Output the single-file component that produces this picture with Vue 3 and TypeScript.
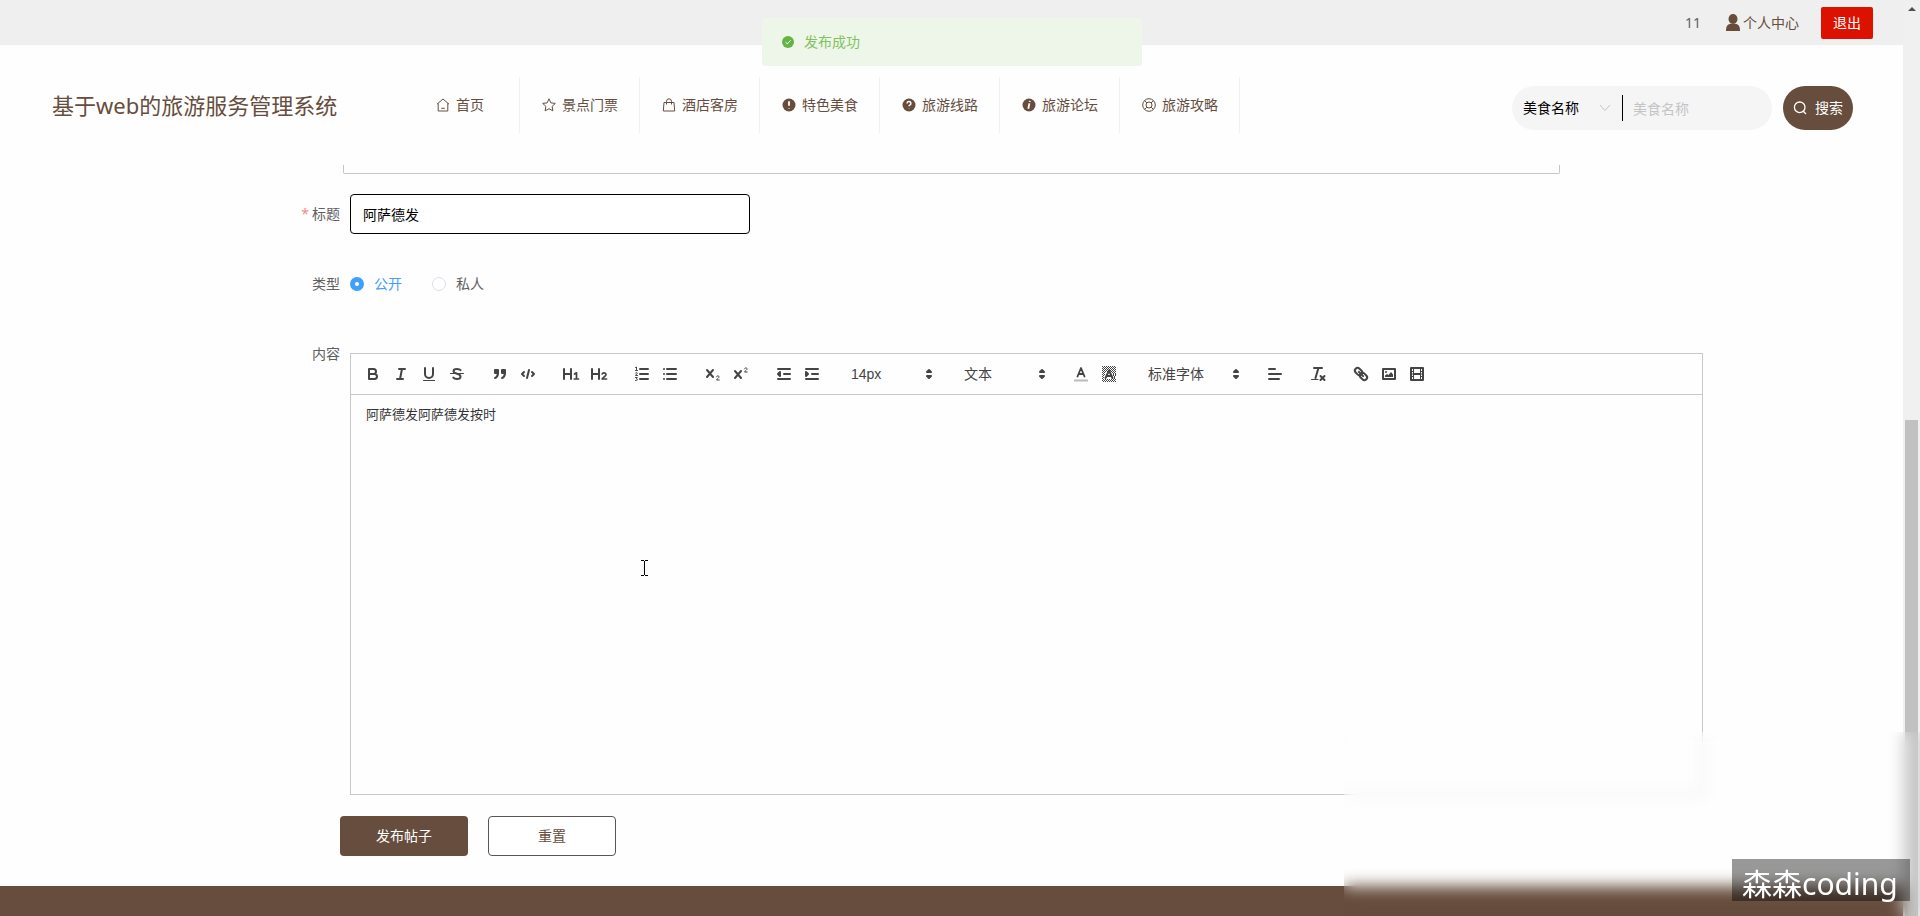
<script setup lang="ts">
import { ref } from 'vue'

interface NavItem {
  label: string
  icon: string
}
interface Tool {
  kind: 'button'
  name: string
  icon: string
}
interface Picker {
  kind: 'picker'
  name: string
  value: string
  wide?: boolean
}

const solid = 'fill="currentColor" stroke="none"'
const disc = `<circle cx="8" cy="8" r="6.5" ${solid}/>`

const navItems: NavItem[] = [
  { label: '首页', icon: '<path d="M2 7.2 8 2l6 5.2M3.2 6.4V14h9.6V6.4M6.3 11.3h3.4"/>' },
  { label: '景点门票', icon: '<path d="m8 1.8 1.9 4.1 4.4.5-3.2 3 .8 4.5L8 11.7l-3.9 2.2.8-4.5-3.2-3 4.4-.5z"/>' },
  { label: '酒店客房', icon: '<path d="M3 5.5h10l.7 8.5H2.3zM5.5 7.500V4.300a2.500 2.500 0 0 1 5 0V7.500"/>' },
  { label: '特色美食', icon: disc + '<path stroke="#fff" stroke-width="1.800" d="M8 4.300v4.400M8 11v.6"/>' },
  { label: '旅游线路', icon: disc + '<path stroke="#fff" stroke-width="1.500" d="M6.100 6.400a1.900 1.900 0 1 1 2.700 1.700c-.6.3-.8.6-.8 1.200M8 11.400v.3"/>' },
  { label: '旅游论坛', icon: disc + '<path stroke="#fff" stroke-width="1.800" d="M8.900 3.900l-.2 1M8.400 6.400 7.300 11.800"/>' },
  { label: '旅游攻略', icon: '<circle cx="8" cy="8" r="6.300"/><circle cx="8" cy="8" r="3"/><path d="m3.600 3.600 2.300 2.300M12.400 3.600l-2.300 2.300M3.600 12.400l2.300-2.300M12.400 12.400l-2.300-2.300"/>' },
]

const btn = (name: string, icon: string): Tool => ({ kind: 'button', name, icon })
const pick = (name: string, value: string, wide = false): Picker => ({ kind: 'picker', name, value, wide })

const toolGroups: (Tool | Picker)[][] = [
  [
    btn('加粗', '<path d="M5 4h4.500a2.500 2.500 0 0 1 0 5H5zM5 9h5.500a2.500 2.500 0 0 1 0 5H5z"/>'),
    btn('斜体', '<path d="M7 4h6M5 14h6M8 14l2-10"/>'),
    btn('下划线', '<path d="M5 3v6a4.012 4.012 0 0 0 4 4 4.012 4.012 0 0 0 4-4V3"/><rect ' + solid + ' x="3" y="15" width="12" height="1"/>'),
    btn('删除线', '<path stroke-width="1" d="M15.500 8.500h-13"/><path d="M12.500 5.200C11.800 4.300 10.600 4 9 4 6.800 4 5.500 4.900 5.500 6.300c0 1.300 1.200 1.800 3.500 2.400 2.400.6 3.500 1.300 3.500 2.800C12.500 13 11.200 14 9 14c-1.700 0-3-.4-3.700-1.400"/>'),
  ],
  [
    btn('引用', '<g fill="currentColor"><rect x="4" y="5" width="3" height="3"/><rect x="11" y="5" width="3" height="3"/><path d="M7 8c0 4.031-3 5-3 5M14 8c0 4.031-3 5-3 5"/></g>'),
    btn('代码', '<path d="M5 7 3 9l2 2M13 7l2 2-2 2M10 5 8 13"/>'),
  ],
  [
    btn('一级标题', '<path d="M2 4v10M9 4v10M2 9h7"/><path stroke-width="1.700" d="M12.500 9 14.500 7.800V14M12.300 14h4.200"/>'),
    btn('二级标题', '<path d="M2 4v10M9 4v10M2 9h7"/><path stroke-width="1.700" d="M12.200 8.900c.3-1.500 3.800-1.500 3.800.5 0 1.600-2.700 2.700-3.800 4.600H16.500"/>'),
  ],
  [
    btn('有序列表', '<path d="M7 4h8M7 9h8M7 14h8"/><path stroke-width="1" d="M2.500 2.500l1-.5v3.500M2.500 5.500h2M2.500 8c.5-.9 2-.6 1.700.3L2.500 10.500h2M2.500 12.500h1.800l-.9 1.300c1.400.1 1.300 1.700 0 1.700h-.9"/>'),
    btn('无序列表', '<path d="M6 4h9M6 9h9M6 14h9M3 4h0M3 9h0M3 14h0"/>'),
  ],
  [
    btn('下标', '<path d="m3 5 6 7M9 5l-6 7"/><path stroke-width="1" d="M12.500 11.800c.2-1.400 2.700-1.300 2.500.2-.1 1-1.700 1.700-2.500 3h2.800"/>'),
    btn('上标', '<path d="m3 6 6 7M9 6l-6 7"/><path stroke-width="1" d="M12.500 3.800c.2-1.400 2.700-1.300 2.500.2-.1 1-1.700 1.700-2.500 3h2.800"/>'),
  ],
  [
    btn('减少缩进', '<path d="M3 14h12M3 4h12M9 9h6"/><path fill="currentColor" d="M5 7v4L3 9z"/>'),
    btn('增加缩进', '<path d="M3 14h12M3 4h12M9 9h6"/><path fill="currentColor" d="M3 7v4l2-2z"/>'),
  ],
  [pick('字号', '14px')],
  [pick('段落格式', '文本')],
  [
    btn('文字颜色', '<path stroke="#bbb" stroke-linecap="butt" d="M2 15.500h14"/><path stroke-width="1.800" d="m5.500 11.500L9 3l3.500 8.500M6.800 9h4.400"/>'),
    btn('背景颜色', '<path stroke-width="1" stroke-dasharray="1 1" stroke-linecap="butt" d="M2 1.500h14M3 2.500h13M2 3.500h14M3 4.500h13M2 5.500h14M3 6.500h13M2 7.500h4M12 7.500h4M3 8.500h2M13 8.500h3M2 9.500h3M13 9.500h3M3 10.500h2M13 10.500h3M2 11.500h2M14 11.500h2M3 12.500h1M14 12.500h2M2 13.500h2M14 13.500h2M3 14.500h13M2 15.500h14M3 16.500h13"/><path d="m5.500 13L9 5.500l3.500 7.500M7 11h4"/>'),
  ],
  [pick('字体', '标准字体', true)],
  [btn('对齐', '<path d="M3 9h12M3 14h10M3 4h6"/>')],
  [btn('清除格式', '<path d="M5 3h8M6.500 13 9.300 3.500M11.500 11l4 4M15.500 11l-4 4"/><path stroke-width="1" d="M2.500 14.500h6.500"/>')],
  [
    btn('链接', '<g transform="rotate(45 9 9)"><rect x="1.500" y="6.300" width="8" height="5.400" rx="2.700"/><rect x="8.500" y="6.300" width="8" height="5.400" rx="2.700"/><path d="M6 9h6"/></g>'),
    btn('图片', '<rect x="3" y="4" width="12" height="10"/><circle ' + solid + ' cx="6" cy="7" r="1"/><path ' + solid + ' d="M5 12v-1.500l2-1.500 1.500 1 2.500-3 2 2.500V12z"/>'),
    btn('视频', '<rect x="3" y="3" width="12" height="12"/><path stroke-width="1" d="M5.500 3v12M12.500 3v12M3 6.500h2.500M3 9h2.500M3 11.500h2.500M12.500 6.500H15M12.500 9H15M12.500 11.500H15"/><path d="M6 9h6"/>'),
  ],
]

const keyword = ref('')
const title = ref('阿萨德发')
const visibility = ref('公开')
const content = ref('阿萨德发阿萨德发按时')

function reset(): void {
  title.value = ''
  visibility.value = '公开'
  content.value = ''
}
</script>

<template>
  <div class="shell">
    <div class="page">
      <div class="topbar">
        <span class="account">11</span>
        <a class="profile" href="#">
          <svg viewBox="0 0 14 18" width="14" height="18"><ellipse cx="7" cy="5" rx="4.500" ry="5" /><path d="M0 17c0-5 1.500-6.500 4.500-7.200h5C12.500 10.500 14 12 14 17z" /></svg>个人中心
        </a>
        <button class="logout" type="button">退出</button>
      </div>

      <header class="header">
        <h1 class="brand">基于web的旅游服务管理系统</h1>
        <nav class="nav">
          <a v-for="item in navItems" :key="item.label" href="#" class="nav-item">
            <svg class="nav-icon" viewBox="0 0 16 16" v-html="item.icon"></svg>
            {{ item.label }}
          </a>
        </nav>
        <form class="search" @submit.prevent>
          <div class="search-box">
            <select class="search-type" aria-label="搜索类型">
              <option>美食名称</option>
            </select>
            <svg class="chevron" viewBox="0 0 12 8"><path d="m1 1 5 5.500L11 1" /></svg>
            <input v-model="keyword" class="search-input" type="text" placeholder="美食名称" aria-label="美食名称" />
          </div>
          <button class="search-button" type="submit">
            <svg viewBox="0 0 14 14"><circle cx="6.700" cy="6.300" r="5.300" /><path d="m10.300 10.300 2.700 2.700" /></svg>
            搜索
          </button>
        </form>
      </header>

      <main>
        <div class="panel-end"></div>
        <form class="form" @submit.prevent @reset.prevent="reset">
          <div class="row">
            <label class="label required" for="post-title">标题</label>
            <input id="post-title" v-model="title" class="title-input" type="text" />
          </div>
          <div class="row" role="radiogroup" aria-label="类型">
            <span class="label">类型</span>
            <label v-for="option in ['公开', '私人']" :key="option" class="radio" :class="{ active: visibility === option }">
              <input v-model="visibility" type="radio" name="visibility" :value="option" />
              {{ option }}
            </label>
          </div>
          <div class="row">
            <label class="label" for="post-content">内容</label>
            <div class="editor">
              <div class="toolbar">
                <div v-for="(group, index) in toolGroups" :key="index" class="group">
                  <template v-for="tool in group" :key="tool.name">
                    <button v-if="tool.kind === 'button'" type="button" class="tool" :aria-label="tool.name">
                      <svg viewBox="0 0 18 18" v-html="tool.icon"></svg>
                    </button>
                    <span v-else class="picker" :class="{ wide: tool.wide }">
                      <select :aria-label="tool.name">
                        <option>{{ tool.value }}</option>
                      </select>
                      <svg viewBox="0 0 18 18"><path d="m7 11 2 2 2-2zM7 7l2-2 2 2z" /></svg>
                    </span>
                  </template>
                </div>
              </div>
              <textarea id="post-content" v-model="content" class="editor-text"></textarea>
            </div>
          </div>
          <div class="actions">
            <button class="action primary" type="submit">发布帖子</button>
            <button class="action" type="reset">重置</button>
          </div>
        </form>
      </main>
      <footer class="footer"></footer>
    </div>

    <div class="scrollbar">
      <svg viewBox="0 0 8 4"><path d="M0 4 4 0l4 4z" /></svg>
      <div class="thumb"></div>
    </div>

    <div class="toast" role="status">
      <svg viewBox="0 0 12 12"><circle cx="6" cy="6" r="6" /><path d="m3.500 6.200 1.800 1.700 3.300-3.600" /></svg>
      发布成功
    </div>
    <svg class="pointer" viewBox="0 0 7 16"><path d="M0 .5h3M4 .5h3M0 15.500h3M4 15.500h3M3.500 1v14" /></svg>
    <div class="frost"></div>
    <div class="watermark">森森coding</div>
  </div>
</template>

<style>
body {
  margin: 0;
  background: #fefefe;
}
</style>

<style scoped>
.shell,
.shell * {
  box-sizing: border-box;
}
.shell {
  position: relative;
  display: grid;
  grid-template-columns: 1fr 17px;
  min-height: 100vh;
  overflow: hidden;
  font-family: "Noto Sans", "Noto Sans CJK SC", sans-serif;
  font-size: 14px;
  line-height: 20px;
  color: #5f6062;
}
button,
input,
select,
textarea {
  font: inherit;
  color: inherit;
}
button {
  cursor: pointer;
}
.page {
  display: flex;
  flex-direction: column;
  min-width: 0;
}
.topbar {
  display: flex;
  align-items: center;
  justify-content: flex-end;
  height: 45px;
  padding-right: 30px;
  background: #efefef;
}
.account {
  margin-right: 25px;
}
.profile {
  display: flex;
  align-items: center;
  gap: 3px;
  margin-right: 22px;
  color: #664d3d;
  text-decoration: none;
}
.profile svg {
  fill: #664d3d;
}
.logout {
  height: 32px;
  padding: 0 12px;
  border: 0;
  border-radius: 2px;
  background: #dd1100;
  color: #fff;
}
.header {
  display: flex;
  align-items: center;
  height: 120px;
  padding: 0 50px 0 52px;
}
.brand {
  flex: 0 0 348px;
  margin: 0;
  font-size: 22px;
  font-weight: 400;
  line-height: 30px;
  color: #664d3d;
  white-space: nowrap;
}
.nav {
  display: flex;
}
.nav-item {
  display: flex;
  align-items: center;
  justify-content: center;
  gap: 5px;
  width: 120px;
  height: 56px;
  border-right: 1px solid #f1f1f1;
  color: #664d3d;
  text-decoration: none;
}
.nav-icon {
  width: 16px;
  height: 16px;
  fill: none;
  stroke: currentColor;
  stroke-width: 1;
}
.search {
  display: flex;
  gap: 11px;
  margin-left: auto;
  padding-top: 6px;
}
.search-box {
  display: flex;
  align-items: center;
  width: 260px;
  height: 44px;
  border-radius: 22px;
  background: #f5f5f6;
}
.search-type {
  width: 87px;
  padding: 0 0 0 11px;
  border: 0;
  appearance: none;
  background: transparent;
  color: #000;
  outline: none;
}
.chevron {
  width: 12px;
  height: 8px;
  margin-right: 11px;
  fill: none;
  stroke: #c0c4cc;
}
.search-input {
  flex: 1;
  min-width: 0;
  height: 26px;
  padding: 0 10px;
  border: 0;
  border-left: 1px solid #000;
  background: transparent;
  outline: none;
}
.search-input::placeholder {
  color: #c3c4c6;
}
.search-button {
  display: flex;
  align-items: center;
  justify-content: center;
  gap: 8px;
  width: 70px;
  padding: 0;
  border: 0;
  border-radius: 22px;
  background: #664d3d;
  color: #fff;
}
.search-button svg {
  width: 14px;
  height: 14px;
  fill: none;
  stroke: #fff;
  stroke-width: 1.3;
}
.panel-end {
  height: 9px;
  margin: 0 343px;
  border: 1px solid #c6c6c6;
  border-top: 0;
  border-radius: 0 0 2px 2px;
}
.form {
  display: flex;
  flex-direction: column;
  gap: 30px;
  padding: 20px 200px 30px 260px;
}
.row {
  display: flex;
  min-height: 40px;
}
.label {
  flex: 0 0 90px;
  padding-right: 10px;
  line-height: 40px;
  text-align: right;
}
.required::before {
  content: "*";
  margin-right: 3px;
  color: #f78989;
}
.title-input {
  width: 400px;
  height: 40px;
  padding: 0 12px;
  border: 1px solid #000;
  border-radius: 4px;
  background: #fff;
  color: #000;
  outline: none;
}
.radio {
  display: flex;
  align-items: center;
  gap: 10px;
  margin-right: 30px;
}
.radio.active {
  color: #409eff;
}
.radio input {
  width: 14px;
  height: 14px;
  margin: 0;
  border: 1px solid #dcdfe6;
  border-radius: 50%;
  appearance: none;
  background: #fff;
}
.radio input:checked {
  border: 5px solid #409eff;
}
.editor {
  flex: 1;
  min-width: 0;
  margin-top: 19px;
  border: 1px solid #c8c8c8;
}
.toolbar {
  display: flex;
  flex-wrap: wrap;
  gap: 0 15px;
  padding: 8px;
  border-bottom: 1px solid #c8c8c8;
  color: #444;
}
.group {
  display: flex;
}
.tool {
  width: 28px;
  height: 24px;
  padding: 3px 5px;
  border: 0;
  background: none;
}
.tool svg {
  display: block;
  width: 18px;
  height: 18px;
  fill: none;
  stroke: currentColor;
  stroke-width: 2;
  stroke-linecap: round;
  stroke-linejoin: round;
}
.picker {
  display: flex;
  align-items: center;
  width: 98px;
  height: 24px;
  padding: 0 1px;
  font-family: "Liberation Sans", "Noto Sans CJK SC", sans-serif;
}
.picker.wide {
  width: 108px;
}
.picker select {
  flex: 1;
  min-width: 0;
  padding: 0 0 0 9px;
  border: 0;
  appearance: none;
  background: none;
  outline: none;
}
.picker svg {
  width: 18px;
  height: 18px;
  fill: currentColor;
  stroke: currentColor;
  stroke-width: 2;
  stroke-linejoin: round;
}
.editor-text {
  display: block;
  width: 100%;
  height: 399px;
  padding: 9px 15px;
  border: 0;
  background: transparent;
  font-size: 13px;
  color: #333;
  resize: none;
  outline: none;
}
.actions {
  display: flex;
  gap: 20px;
  margin: -9px 0 0 80px;
}
.action {
  width: 128px;
  height: 40px;
  border: 1px solid #5c5554;
  border-radius: 4px;
  background: #fff;
  color: #664d3d;
}
.action.primary {
  border: 0;
  background: #664d3d;
  color: #fff;
}
.footer {
  flex: 1;
  min-height: 30px;
  background: #664d3d;
}
.scrollbar {
  display: flex;
  flex-direction: column;
  align-items: center;
  padding-top: 7px;
  background: #f0f0f0;
}
.scrollbar svg {
  width: 8px;
  height: 4px;
  fill: #505050;
}
.thumb {
  width: 13px;
  margin-top: 409px;
  flex: 1;
  background: #c1c1c1;
}
.toast {
  position: absolute;
  top: 18px;
  left: calc(50% - 198px);
  display: flex;
  align-items: center;
  gap: 10px;
  width: 380px;
  height: 48px;
  padding: 0 20px;
  border-radius: 4px;
  background: #eef6e9;
  color: #7fc35c;
}
.toast svg {
  width: 12px;
  height: 12px;
  fill: #62b443;
  stroke: #fff;
  stroke-width: 1;
}
.toast path {
  fill: none;
}
.toast circle {
  stroke: none;
}
.pointer {
  position: absolute;
  top: 560px;
  left: 641px;
  width: 7px;
  height: 16px;
  stroke: #000;
}
.frost {
  position: absolute;
  right: 0;
  bottom: 0;
  width: 576px;
  height: 184px;
  backdrop-filter: blur(8px);
}
.watermark {
  position: absolute;
  right: 10px;
  bottom: 15px;
  width: 178px;
  height: 42px;
  padding-left: 10px;
  background: rgba(0, 0, 0, 0.4);
  font-size: 30px;
  line-height: 50px;
  color: #fff;
  white-space: nowrap;
}
</style>
